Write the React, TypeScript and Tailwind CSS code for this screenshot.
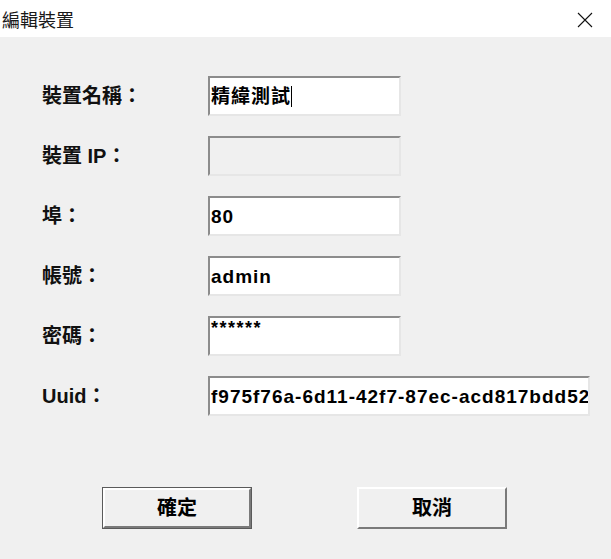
import React from "react";

const fontStack = "font-['Liberation_Sans','Noto_Sans_CJK_TC',sans-serif]";

const Field = ({
  label,
  value,
  wide,
  disabled,
  caret,
  small,
}: {
  label: string;
  value?: string;
  wide?: boolean;
  disabled?: boolean;
  caret?: boolean;
  small?: boolean;
}) => {
  return (
    <div className="flex items-center h-[40px]">
      <div className="w-[166px] text-[20px] font-bold text-[#111] leading-none">
        {label}
      </div>
      <div
        className={`h-[40px] ${wide ? "w-[382px]" : "w-[193px]"} ${
          disabled ? "bg-[#f0f0f0]" : "bg-white"
        } border-2 border-t-[#8c8c8c] border-l-[#8c8c8c] border-r-[#e6e6e6] border-b-[#e6e6e6] flex items-center pl-[1px] overflow-hidden`}
      >
        {value && (
          <span
            className={`${
              small
                ? "text-[18px] self-start mt-[1px] tracking-[1.5px]"
                : "text-[19px] tracking-[1px]"
            } font-bold text-black whitespace-nowrap leading-none`}
          >
            {value}
          </span>
        )}
        {caret && <span className="w-[1px] h-[21px] bg-black" />}
      </div>
    </div>
  );
};

export default function App() {
  return (
    <div className={`w-[611px] h-[559px] bg-[#f0f0f0] ${fontStack}`}>
      {/* title bar */}
      <div className="h-[37px] bg-white flex items-center justify-between pl-[2px] pr-[18px]">
        <span className="text-[18px] text-[#1a1a1a] font-['Noto_Sans_CJK_TC',sans-serif] leading-none">
          編輯裝置
        </span>
        <svg width="16" height="16" viewBox="0 0 16 16" className="mt-[2px]">
          <path d="M1 1L15 15M15 1L1 15" stroke="#111" strokeWidth="1.1" />
        </svg>
      </div>

      <div className="flex flex-col gap-5 pt-[39px] pl-[42px]">
        <Field label="裝置名稱：" value="精緯測試" caret />
        <Field label="裝置 IP：" disabled />
        <Field label="埠：" value="80" />
        <Field label="帳號：" value="admin" />
        <Field label="密碼：" value="******" small />
        <Field label="Uuid：" value="f975f76a-6d11-42f7-87ec-acd817bdd52" wide />
      </div>

      <div className="flex gap-[105px] pl-[102px] pt-[71px]">
        <button className="w-[150px] h-[42px] border border-[#5a5a5a] bg-[#f0f0f0] p-0">
          <div className="w-full h-full border-2 border-t-white border-l-white border-r-[#7a7a7a] border-b-[#7a7a7a] flex items-center justify-center text-[20px] font-bold text-black">
            確定
          </div>
        </button>
        <button className="w-[150px] h-[42px] border-2 border-t-white border-l-white border-r-[#7a7a7a] border-b-[#7a7a7a] bg-[#f0f0f0] flex items-center justify-center text-[20px] font-bold text-black">
          取消
        </button>
      </div>
    </div>
  );
}
